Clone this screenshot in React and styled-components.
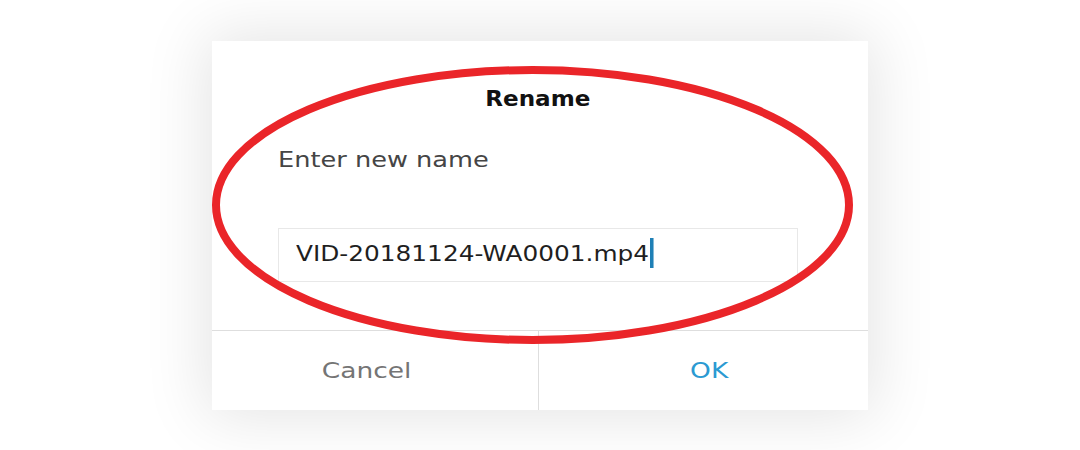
import React from 'react'
import styled, { createGlobalStyle } from 'styled-components'

const GRAY_TEXT = '#454545'
const DARK_TEXT = '#1f1f1f'
const LINE = '#dedede'
const BLUE = '#2b9ad2'
const CURSOR = '#1f80b6'
const MARK_RED = '#ea2529'

const GlobalStyle = createGlobalStyle`
    html, body {
        margin: 0;
        padding: 0;
        background: #ffffff;
    }
    body {
        font-family: "DejaVu Sans", "Liberation Sans", sans-serif;
    }
`

const Stage = styled.div`
    position: relative;
    width: 1080px;
    height: 450px;
    display: flex;
    align-items: center;
    justify-content: center;
    overflow: hidden;
`
const Dialog = styled.div`
    width: 656px;
    height: 369px;
    background: #ffffff;
    box-shadow: 0 0 60px 6px rgba(0, 0, 0, 0.11);
    display: flex;
    flex-direction: column;
`
const Body = styled.div`
    flex: 1;
    padding: 45px 70px 0 66px;
    display: flex;
    flex-direction: column;
`
// the screenshot is a little stretched sideways, so text is widened to match
const Wide = styled.span`
    display: inline-block;
    white-space: nowrap;
    transform: scaleX(${p => p.$sx || 1.2});
    transform-origin: ${p => (p.$center ? 'center' : 'left')} center;
`
const Title = styled.div`
    text-align: center;
    font-size: 21px;
    line-height: 26px;
    font-weight: 700;
    color: #111111;
`
const Label = styled.div`
    margin-top: 35px;
    font-size: 21px;
    line-height: 26px;
    color: ${GRAY_TEXT};
`
const NameBox = styled.div`
    margin-top: 55px;
    height: 52px;
    border: 1px solid #e8e8e8;
    display: flex;
    align-items: center;
    padding-left: 17px;
    font-size: 21px;
    color: ${DARK_TEXT};
`
const Caret = styled.span`
    display: inline-block;
    vertical-align: middle;
    width: 2.5px;
    height: 30px;
    margin-left: 1px;
    margin-top: -4px;
    background: ${CURSOR};
`
const Actions = styled.div`
    height: 79px;
    border-top: 1px solid ${LINE};
    display: grid;
    grid-template-columns: 326px 1fr;
`
const Action = styled.div`
    display: flex;
    align-items: center;
    justify-content: center;
    font-size: 21px;
    padding-top: 2px;
    color: ${p => (p.$primary ? BLUE : '#757575')};
    padding-right: ${p => (p.$primary ? '0' : '16px')};
    padding-left: ${p => (p.$primary ? '11px' : '0')};
    border-left: ${p => (p.$primary ? `1px solid ${LINE}` : 'none')};
`
const Markup = styled.svg`
    position: absolute;
    inset: 0;
    width: 1080px;
    height: 450px;
    pointer-events: none;
`

export default function App() {
    return (
        <Stage>
            <GlobalStyle />
            <Dialog>
                <Body>
                    <Title>
                        <Wide $center $sx={1.1}>Rename</Wide>
                    </Title>
                    <Label>
                        <Wide $sx={1.22}>Enter new name</Wide>
                    </Label>
                    <NameBox>
                        <Wide $sx={1.18}>
                            VID-20181124-WA0001.mp4<Caret />
                        </Wide>
                    </NameBox>
                </Body>
                <Actions>
                    <Action>
                        <Wide $center $sx={1.26}>Cancel</Wide>
                    </Action>
                    <Action $primary>
                        <Wide $center $sx={1.26}>OK</Wide>
                    </Action>
                </Actions>
            </Dialog>
            <Markup viewBox="0 0 1080 450">
                <ellipse
                    cx="532.5"
                    cy="205"
                    rx="316.5"
                    ry="135"
                    fill="none"
                    stroke={MARK_RED}
                    strokeWidth="8"
                />
            </Markup>
        </Stage>
    )
}
